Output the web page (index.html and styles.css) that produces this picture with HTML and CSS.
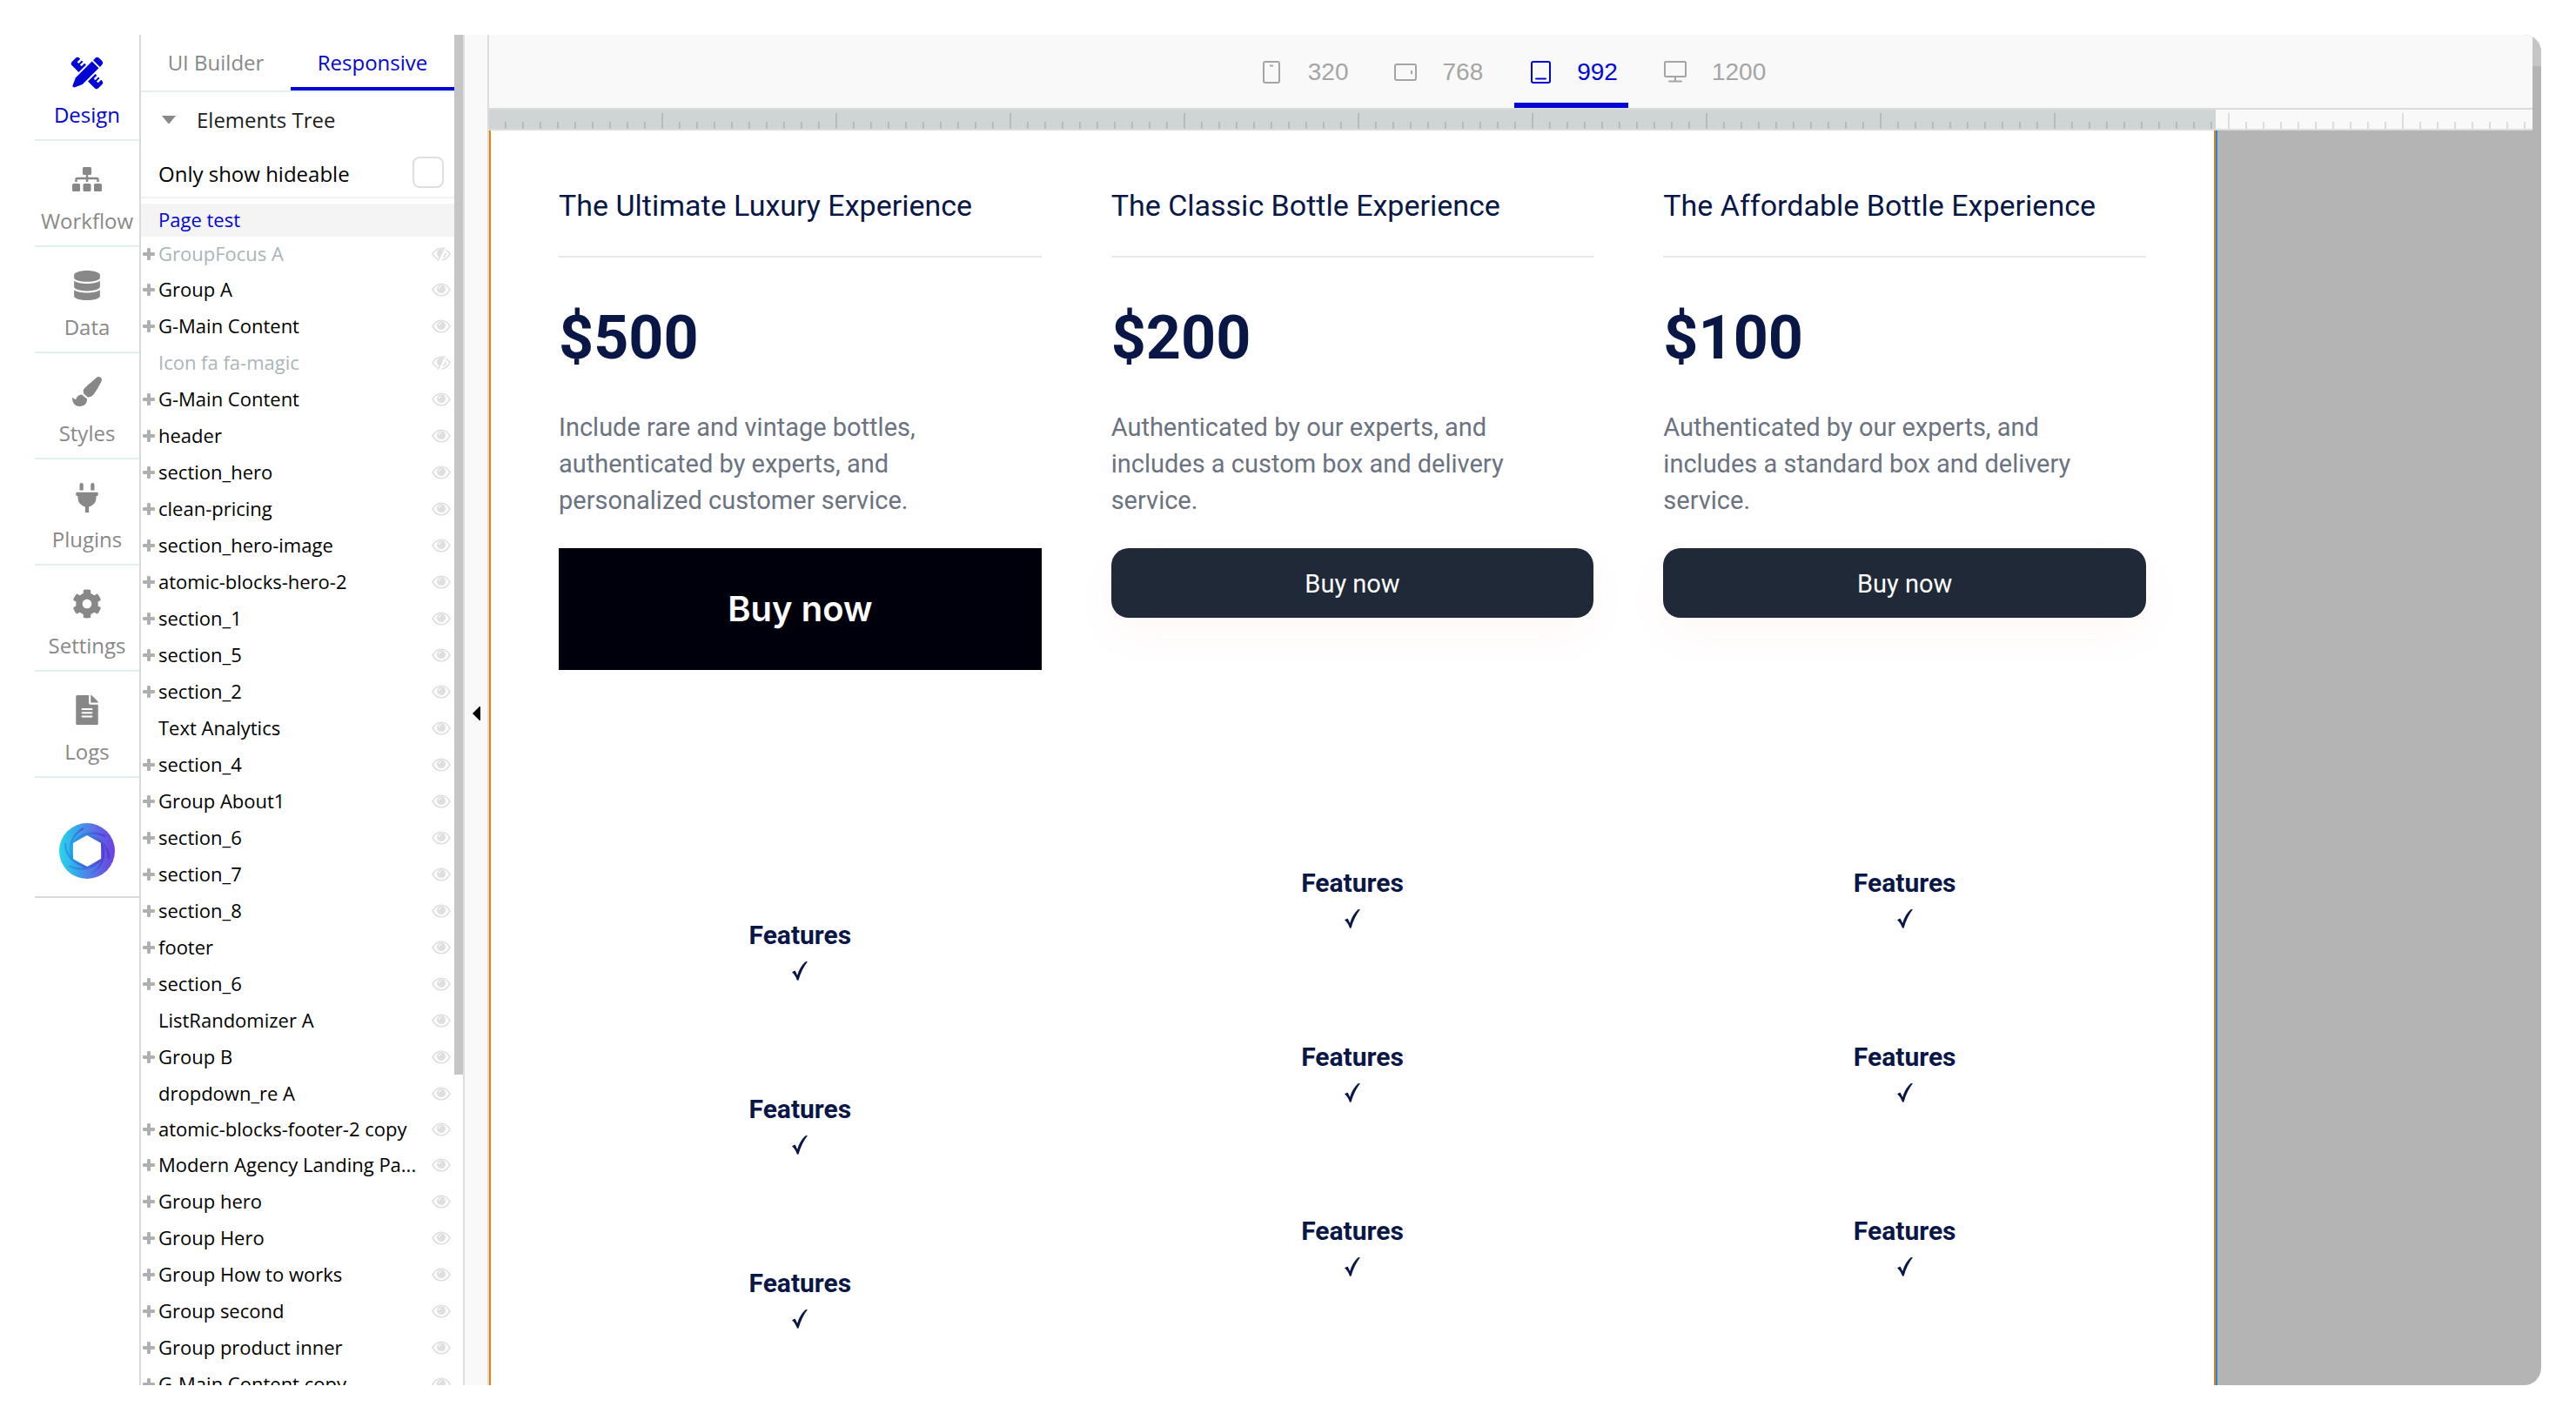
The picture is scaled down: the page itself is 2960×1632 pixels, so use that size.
FILE: index.html
```html
<!DOCTYPE html>
<html lang="en">
<head>
<meta charset="utf-8">
<title>Page test – Responsive editor</title>
<meta name="viewport" content="width=device-width, initial-scale=1">
<link rel="stylesheet" href="styles.css">
</head>
<body>
<svg class="sprite" aria-hidden="true">
  <symbol id="eye" viewBox="0 0 22 16">
    <path d="M1 8C3.500 3.700 7 1.200 11 1.200S18.500 3.700 21 8C18.500 12.300 15 14.800 11 14.800S3.500 12.300 1 8z" fill="none" stroke="currentColor" stroke-width="1.600"/>
    <circle cx="11" cy="7.200" r="5" fill="currentColor"/>
    <path d="M8.300 7.200a2.800 2.800 0 0 1 2.800-2.900" fill="none" stroke="#fff" stroke-width="1"/>
  </symbol>
  <symbol id="eye-off" viewBox="0 0 22 18">
    <path d="M7.500 15C4.800 13.800 2.600 11.700 1 9C3.500 4.700 7 2.200 11 2.200l2 .2M16.500 4.200C18.300 5.300 19.800 7 21 9c-2.300 4-5.500 6.500-9.300 6.800" fill="none" stroke="currentColor" stroke-width="1.600"/>
    <path d="M9 12.500C6.800 11 6 9.500 6 8a5 5 0 0 1 6.500-4.600z" fill="currentColor"/>
    <path d="M14.800 1L7 17M16 7.500c.3 2-.7 4-2.600 5.200" fill="none" stroke="currentColor" stroke-width="1.600"/>
  </symbol>
  <symbol id="plus" viewBox="0 0 14 14">
    <path d="M5 1.500Q5 0 6 0h2q1 0 1 1.500V5h3.500Q14 5 14 6v2q0 1-1.500 1H9v3.500Q9 14 8 14H6q-1 0-1-1.500V9H1.500Q0 9 0 8V6q0-1 1.500-1H5z" fill="currentColor"/>
  </symbol>
  <symbol id="check" viewBox="0 0 20 24">
    <path d="M1 13.200l3.400-1.700c1.100 1.600 2 3.400 2.700 5.400C9.300 10 12.600 4.800 16.500 1.200L19 1C14.400 7 10.800 14.300 8.600 22.600L7 22.800C5.700 18.900 3.900 15.700 1 13.200z" fill="currentColor"/>
  </symbol>
</svg>

<div class="app">
  <nav class="rail" aria-label="Editor sections">
    <a class="rail-item rail-item--active" href="#design">
      <svg class="rail-icon" viewBox="0 0 34 34" aria-hidden="true">
        <g transform="translate(17 17) rotate(45)" fill="currentColor">
          <path d="M-5.500-15.500v-3q0-3.500 3.500-3.500h4q3.500 0 3.500 3.500v3z"/>
          <path d="M-5.500-13.500h11V13L1.500 22q-1.500 1.500-3 0L-5.500 13z"/>
          <path d="M-7.500-6v12h-10.500q-3.500 0-3.500-3v-6q0-3 3.500-3h1v5h2.500v-5h2v5h2.500v-5z"/>
          <path d="M7.500-6v12h10.500q3.500 0 3.500-3v-6q0-3-3.500-3h-1v5h-2.500v-5h-2v5h-2.500v-5z"/>
        </g>
      </svg>
      <span>Design</span>
    </a>
    <a class="rail-item" href="#workflow">
      <svg class="rail-icon" viewBox="0 0 34 34" aria-hidden="true">
        <g fill="currentColor"><rect x="12" y="3" width="10" height="9" rx="1.500"/><rect x="0" y="22" width="9" height="9" rx="1.500"/><rect x="12.500" y="22" width="9" height="9" rx="1.500"/><rect x="25" y="22" width="9" height="9" rx="1.500"/></g>
        <path d="M17 11v9M4.500 20v-3q0-1 1-1h23q1 0 1 1v3" fill="none" stroke="currentColor" stroke-width="2.500"/>
      </svg>
      <span>Workflow</span>
    </a>
    <a class="rail-item" href="#data">
      <svg class="rail-icon" viewBox="0 0 448 512" aria-hidden="true"><path fill="currentColor" d="M448 73.143v45.714C448 159.143 347.667 192 224 192S0 159.143 0 118.857V73.143C0 32.857 100.333 0 224 0s224 32.857 224 73.143zM448 176v102.857C448 319.143 347.667 352 224 352S0 319.143 0 278.857V176c48.125 33.143 136.208 48.572 224 48.572S399.874 209.143 448 176zm0 160v102.857C448 479.143 347.667 512 224 512S0 479.143 0 438.857V336c48.125 33.143 136.208 48.572 224 48.572S399.874 369.143 448 336z"/></svg>
      <span>Data</span>
    </a>
    <a class="rail-item" href="#styles">
      <svg class="rail-icon" viewBox="0 0 512 512" aria-hidden="true"><path fill="currentColor" d="M167.020 309.340c-40.120 2.580-76.530 17.860-97.190 72.300-2.350 6.210-8 9.980-14.590 9.980-11.110 0-45.460-27.670-55.250-34.350C0 439.620 37.930 512 128 512c75.860 0 128-43.770 128-120.190 0-3.110-.65-6.080-.97-9.130l-88.010-73.340zM457.890 0c-15.160 0-29.370 6.710-40.210 16.450C213.270 199.050 192 203.340 192 257.090c0 13.700 3.250 26.760 8.730 38.700l63.820 53.180c7.210 1.800 14.640 3.030 22.390 3.030 62.110 0 98.110-45.470 211.160-256.460 7.380-14.350 13.900-29.850 13.900-45.990C512 20.640 486 0 457.890 0z"/></svg>
      <span>Styles</span>
    </a>
    <a class="rail-item" href="#plugins">
      <svg class="rail-icon" viewBox="0 0 384 512" aria-hidden="true"><path fill="currentColor" d="M320 32a32 32 0 0 0-64 0v96h64zm48 128H16A16 16 0 0 0 0 176v32a16 16 0 0 0 16 16h16v32a160.070 160.070 0 0 0 128 156.800V512h64v-99.200A160.070 160.070 0 0 0 352 256v-32h16a16 16 0 0 0 16-16v-32a16 16 0 0 0-16-16zM128 32a32 32 0 0 0-64 0v96h64z"/></svg>
      <span>Plugins</span>
    </a>
    <a class="rail-item" href="#settings">
      <svg class="rail-icon" viewBox="0 0 512 512" aria-hidden="true"><path fill="currentColor" d="M487.400 315.700l-42.600-24.600c4.300-23.200 4.300-47 0-70.200l42.600-24.600c4.900-2.800 7.100-8.600 5.500-14-11.100-35.600-30-67.800-54.700-94.600-3.800-4.100-10-5.100-14.800-2.300L380.800 110c-17.900-15.400-38.500-27.300-60.800-35.100V25.800c0-5.600-3.900-10.500-9.400-11.700-36.700-8.200-74.300-7.800-109.200 0-5.500 1.200-9.400 6.100-9.400 11.700V75c-22.200 7.900-42.800 19.800-60.800 35.100L88.700 85.500c-4.900-2.800-11-1.900-14.800 2.300-24.700 26.700-43.600 58.900-54.700 94.600-1.700 5.400.6 11.200 5.500 14L67.300 221c-4.300 23.200-4.300 47 0 70.200l-42.600 24.600c-4.900 2.800-7.100 8.600-5.500 14 11.100 35.600 30 67.800 54.700 94.600 3.800 4.100 10 5.100 14.800 2.300l42.600-24.600c17.900 15.400 38.500 27.300 60.800 35.100v49.200c0 5.600 3.900 10.500 9.400 11.700 36.700 8.200 74.300 7.800 109.200 0 5.500-1.200 9.400-6.100 9.400-11.700v-49.200c22.200-7.900 42.800-19.800 60.800-35.100l42.600 24.600c4.900 2.800 11 1.900 14.800-2.300 24.700-26.700 43.600-58.900 54.700-94.600 1.500-5.500-.7-11.300-5.600-14.100zM256 336c-44.100 0-80-35.900-80-80s35.900-80 80-80 80 35.900 80 80-35.900 80-80 80z"/></svg>
      <span>Settings</span>
    </a>
    <a class="rail-item" href="#logs">
      <svg class="rail-icon" viewBox="0 0 384 512" aria-hidden="true"><path fill="currentColor" d="M224 136V0H24C10.700 0 0 10.700 0 24v464c0 13.300 10.700 24 24 24h336c13.300 0 24-10.700 24-24V160H248c-13.200 0-24-10.800-24-24zm64 236c0 6.600-5.400 12-12 12H108c-6.600 0-12-5.400-12-12v-8c0-6.600 5.400-12 12-12h168c6.600 0 12 5.400 12 12v8zm0-64c0 6.600-5.400 12-12 12H108c-6.600 0-12-5.400-12-12v-8c0-6.600 5.400-12 12-12h168c6.600 0 12 5.400 12 12v8zm0-72v8c0 6.600-5.400 12-12 12H108c-6.600 0-12-5.400-12-12v-8c0-6.600 5.400-12 12-12h168c6.600 0 12 5.400 12 12zm96-114.100v6.100H256V0h6.100c6.400 0 12.500 2.500 17 7l97.900 98c4.500 4.500 7 10.600 7 16.900z"/></svg>
      <span>Logs</span>
    </a>
    <a class="rail-logo" href="#home" aria-label="Home">
      <svg width="64" height="64" viewBox="0 0 64 64" aria-hidden="true">
        <defs>
          <linearGradient id="ring" x1="0" y1="0" x2="1" y2="0"><stop offset="0" stop-color="#2bd3ea"/><stop offset=".3" stop-color="#36a9ea"/><stop offset=".6" stop-color="#5b74e6"/><stop offset="1" stop-color="#6d3fe0"/></linearGradient>
          <linearGradient id="fold" x1="0" y1="0" x2="1" y2="0"><stop offset="0" stop-color="#1b8fe0"/><stop offset=".55" stop-color="#2a62d8"/><stop offset="1" stop-color="#4a26cc"/></linearGradient>
        </defs>
        <circle cx="32" cy="32" r="32" fill="url(#ring)"/>
        <g fill="none" stroke="url(#fold)" stroke-width="2.500" stroke-opacity=".6">
          <path d="M16 41C10 28 13 14 28 6"/>
          <path d="M16 23C24 12 39 8 53 15"/>
          <path d="M32 14C46 16 57 27 57 41"/>
          <path d="M48 23C54 36 51 50 36 58"/>
          <path d="M48 41C40 52 25 56 11 49"/>
          <path d="M32 50C18 48 7 37 7 23"/>
        </g>
        <path d="M32 14l16 9v18l-16 9-16-9V23z" fill="#fff"/>
      </svg>
    </a>
  </nav>

  <aside class="panel">
    <div class="panel-body">
      <div class="tabs" role="tablist">
        <button class="tab" type="button" role="tab" aria-selected="false">UI Builder</button>
        <button class="tab tab--active" type="button" role="tab" aria-selected="true">Responsive</button>
      </div>
      <button class="tree-head" type="button" aria-expanded="true">
        <svg width="16" height="10" viewBox="0 0 16 10" aria-hidden="true"><path d="M0 0h16L9 8.500q-1 1-2 0z" fill="#888"/></svg>
        Elements Tree
      </button>
      <div class="filter">
        <label for="hideable">Only show hideable</label>
        <input class="tick" id="hideable" type="checkbox">
      </div>
      <ul class="tree" id="tree">
        <li class="node node--page"><span class="name">Page test</span></li>
      </ul>
    </div>
    <div class="scroll"><div class="scroll-thumb"></div></div>
  </aside>

  <div class="gutter">
    <button class="collapse" type="button" aria-label="Collapse panel">
      <svg width="9" height="16" viewBox="0 0 9 16" aria-hidden="true"><path d="M9 0v16H8L0 8l8-8z" fill="#000"/></svg>
    </button>
  </div>

  <main class="stage">
    <header class="stage-head">
      <div class="widths">
        <button class="width" type="button">
          <svg width="28" height="28" viewBox="0 0 28 28" fill="none" stroke="currentColor" stroke-width="2" aria-hidden="true"><rect x="5" y="2" width="18" height="24" rx="2"/><path d="M12 6.500h4" stroke-width="2"/></svg>
          320
        </button>
        <button class="width" type="button">
          <svg width="28" height="28" viewBox="0 0 28 28" fill="none" stroke="currentColor" stroke-width="2" aria-hidden="true"><rect x="2" y="5" width="24" height="18" rx="2"/><path d="M21 12v4" stroke-width="2"/></svg>
          768
        </button>
        <button class="width width--active" type="button">
          <svg width="28" height="28" viewBox="0 0 28 28" fill="none" stroke="currentColor" stroke-width="2" aria-hidden="true"><rect x="4" y="2" width="21" height="24" rx="2"/><path d="M9 21.500h11" stroke-width="2" stroke-linecap="round"/></svg>
          992
        </button>
        <button class="width" type="button">
          <svg width="28" height="28" viewBox="0 0 28 28" fill="none" stroke="currentColor" stroke-width="2" aria-hidden="true"><rect x="2" y="2" width="24" height="17" rx="1"/><path d="M14 20v4M7 24.500h14" stroke-linecap="round"/></svg>
          1200
        </button>
      </div>
      <div class="ruler"><div class="ruler-in"></div><div class="ruler-out"></div></div>
    </header>
    <div class="stage-bar"><div class="stage-bar-thumb"></div></div>

    <div class="canvas">
      <div class="page">
        <section class="plan">
          <h2 class="plan-title">The Ultimate Luxury Experience</h2>
          <p class="price">$500</p>
          <p class="about">Include rare and vintage bottles, authenticated by experts, and personalized customer service.</p>
          <button class="buy buy--block" type="button">Buy now</button>
          <ul class="features">
            <li>Features<svg class="check" aria-hidden="true"><use href="#check"/></svg></li>
            <li>Features<svg class="check" aria-hidden="true"><use href="#check"/></svg></li>
            <li>Features<svg class="check" aria-hidden="true"><use href="#check"/></svg></li>
          </ul>
        </section>
        <section class="plan">
          <h2 class="plan-title">The Classic Bottle Experience</h2>
          <p class="price">$200</p>
          <p class="about">Authenticated by our experts, and includes a custom box and delivery service.</p>
          <button class="buy" type="button">Buy now</button>
          <ul class="features">
            <li>Features<svg class="check" aria-hidden="true"><use href="#check"/></svg></li>
            <li>Features<svg class="check" aria-hidden="true"><use href="#check"/></svg></li>
            <li>Features<svg class="check" aria-hidden="true"><use href="#check"/></svg></li>
          </ul>
        </section>
        <section class="plan">
          <h2 class="plan-title">The Affordable Bottle Experience</h2>
          <p class="price">$100</p>
          <p class="about">Authenticated by our experts, and includes a standard box and delivery service.</p>
          <button class="buy" type="button">Buy now</button>
          <ul class="features">
            <li>Features<svg class="check" aria-hidden="true"><use href="#check"/></svg></li>
            <li>Features<svg class="check" aria-hidden="true"><use href="#check"/></svg></li>
            <li>Features<svg class="check" aria-hidden="true"><use href="#check"/></svg></li>
          </ul>
        </section>
      </div>
    </div>
  </main>
</div>
<script src="tree.js"></script>
</body>
</html>
```
FILE: tree.js
```js
// Elements of the page. leaf: no children to expand; hidden: not visible on load; tight: shorter row.
const nodes = [
  { name: 'GroupFocus A', hidden: true, tight: true },
  { name: 'Group A' },
  { name: 'G-Main Content' },
  { name: 'Icon fa fa-magic', leaf: true, hidden: true },
  { name: 'G-Main Content' },
  { name: 'header' },
  { name: 'section_hero' },
  { name: 'clean-pricing' },
  { name: 'section_hero-image' },
  { name: 'atomic-blocks-hero-2' },
  { name: 'section_1' },
  { name: 'section_5' },
  { name: 'section_2' },
  { name: 'Text Analytics', leaf: true },
  { name: 'section_4' },
  { name: 'Group About1' },
  { name: 'section_6' },
  { name: 'section_7' },
  { name: 'section_8' },
  { name: 'footer' },
  { name: 'section_6' },
  { name: 'ListRandomizer A', leaf: true },
  { name: 'Group B' },
  { name: 'dropdown_re A', leaf: true },
  { name: 'atomic-blocks-footer-2 copy', tight: true },
  { name: 'Modern Agency Landing Pa...' },
  { name: 'Group hero' },
  { name: 'Group Hero' },
  { name: 'Group How to works' },
  { name: 'Group second' },
  { name: 'Group product inner' },
  { name: 'G-Main Content copy' }
];

const tree = document.getElementById('tree');
for (const node of nodes) {
  const row = document.createElement('li');
  row.className = 'node' + (node.hidden ? ' node--hidden' : '') + (node.tight ? ' node--tight' : '');
  const toggle = node.leaf
    ? ''
    : `<button class="toggle" type="button" aria-label="Expand ${node.name}"><svg width="14" height="14"><use href="#plus"/></svg></button>`;
  row.innerHTML = `${toggle}<span class="name">${node.name}</span>
    <button class="see" type="button" aria-label="Toggle visibility of ${node.name}"><svg width="22" height="18"><use href="#${node.hidden ? 'eye-off' : 'eye'}"/></svg></button>`;
  tree.append(row);
}
```
FILE: styles.css
```css
* {
  box-sizing: border-box;
}

body {
  margin: 0;
  padding: 40px;
  background: #fff;
  font-family: "Open Sans", "Liberation Sans", sans-serif;
  font-size: 24px;
  line-height: 32px;
  color: #888;
}

button {
  margin: 0;
  padding: 0;
  border: 0;
  background: none;
  color: inherit;
  font: inherit;
  cursor: pointer;
}

ul,
h2,
p {
  margin: 0;
  padding: 0;
  list-style: none;
}

svg {
  display: block;
  flex: none;
}

.sprite {
  position: absolute;
  width: 0;
  height: 0;
}

.app {
  display: flex;
  height: calc(100vh - 80px);
  border-radius: 20px;
  overflow: hidden;
}

/* Section rail */
.rail {
  flex: none;
  width: 122px;
  border-right: 2px solid #dadada;
}

.rail-item {
  display: flex;
  flex-direction: column;
  align-items: center;
  gap: 15px;
  padding: 27px 0 12px;
  border-bottom: 2px solid #e1eef2;
  color: #888;
  text-decoration: none;
}

.rail-item--active {
  color: #0205d3;
}

.rail-icon {
  height: 34px;
  width: 34px;
  overflow: visible;
}

.rail-logo {
  display: flex;
  justify-content: center;
  padding: 52px 0 20px;
  border-bottom: 2px solid #dadada;
}

/* Elements panel */
.panel {
  flex: none;
  display: flex;
  width: 372px;
  border-right: 2px solid #dedede;
}

.panel-body {
  flex: 1;
  min-width: 0;
  overflow: hidden;
}

.tabs {
  display: grid;
  grid-template-columns: 172px 1fr;
  border-bottom: 2px solid #e1eef2;
}

.tab {
  height: 64px;
  padding-top: 4px;
  border-bottom: 4px solid transparent;
}

.tab--active {
  border-bottom-color: #0205d3;
  color: #0205d3;
}

.tree-head {
  display: flex;
  align-items: center;
  gap: 24px;
  width: 100%;
  height: 64px;
  padding: 0 24px;
  color: #1c1c1c;
}

.filter {
  display: flex;
  align-items: center;
  justify-content: space-between;
  height: 58px;
  padding: 0 12px 0 20px;
  border-bottom: 2px solid #f2f2f2;
  color: #000;
}

.filter label {
  padding-top: 4px;
}

.tick {
  appearance: none;
  width: 36px;
  height: 36px;
  margin: 0;
  border: 2px solid #dedede;
  border-radius: 8px;
  background: #fff;
}

.tick:checked {
  background: #0205d3;
}

.tree {
  padding-top: 6px;
}

.node {
  display: flex;
  align-items: center;
  height: 42px;
  padding-right: 4px;
  color: #000;
  font-size: 22px;
}

.node--tight {
  height: 40px;
}

.node--page {
  height: 38px;
  background: #f4f4f4;
  color: #0205d3;
}

.node--hidden {
  color: #a9b5b8;
}

.name {
  flex: 1;
  min-width: 0;
  padding: 0 10px 3px 20px;
  overflow: hidden;
  text-overflow: ellipsis;
  white-space: nowrap;
}

.toggle {
  padding-left: 2px;
  color: #aeb0b0;
}

.toggle + .name {
  padding-left: 4px;
}

.see {
  color: #dfdfdf;
}

.scroll {
  flex: none;
  width: 10px;
}

.scroll-thumb {
  height: 77%;
  background: #c5c5c5;
}

.gutter {
  flex: none;
  display: flex;
  align-items: center;
  justify-content: center;
  width: 28px;
  padding-top: 8px;
  border-right: 2px solid #dcdcdc;
  background: #f9f9f9;
}

/* Stage: toolbar and ruler above the canvas, scroll bar on the right */
.stage {
  flex: 1;
  display: grid;
  grid-template-columns: minmax(0, 1fr) 10px;
  grid-template-rows: auto minmax(0, 1fr);
  min-width: 0;
  background: #b4b4b4;
}

.stage-head {
  background: #f9f9f9;
}

.widths {
  display: flex;
  justify-content: center;
  gap: 24px;
  border-bottom: 2px solid #dcdcdc;
}

.width {
  display: flex;
  align-items: center;
  gap: 28px;
  height: 84px;
  padding: 8px 12px 0 16px;
  border-bottom: 6px solid transparent;
  color: #a5a5a5;
  font-family: "Liberation Sans", Arial, sans-serif;
  font-size: 28px;
}

.width--active {
  border-bottom-color: #0205d3;
  color: #0205d3;
}

.ruler {
  display: grid;
  grid-template-columns: minmax(0, 1fr) 364px;
  height: 24px;
  border-bottom: 2px solid #dcdcdc;
}

.ruler-in,
.ruler-out {
  --tick: #dcdcdc;
  background-image:
    linear-gradient(90deg, var(--tick) 2px, transparent 2px),
    linear-gradient(90deg, var(--tick) 2px, transparent 2px);
  background-size: 20px 8px, 200px 18px;
  background-repeat: repeat-x;
  background-position: 14px 100%, 14px 100%;
}

.ruler-in {
  --tick: #b5bcbc;
  background-color: #cfd5d5;
  background-position: -2px 100%, -2px 100%;
}

.stage-bar-thumb {
  height: 36px;
  background: #c6c6c6;
}

.canvas {
  grid-column: 1 / -1;
  padding-right: 374px;
  overflow: hidden;
}

/* Edited page */
.page {
  display: grid;
  grid-template-columns: repeat(3, minmax(0, 1fr));
  gap: 80px;
  height: 100%;
  padding: 65px 78px 0;
  border: solid #e58008;
  border-width: 0 2px;
  box-shadow: 2px 0 0 #1c86e8;
  background: #fff;
  color: #091747;
  font-family: Roboto, "Open Sans", sans-serif;
  font-size: 30px;
  line-height: 42px;
}

.plan {
  display: flex;
  flex-direction: column;
}

.plan-title {
  padding-bottom: 37px;
  border-bottom: 2px solid #e5e7eb;
  font-size: 34px;
  font-weight: 400;
}

.price {
  padding: 52px 0 42px;
  font-size: 70px;
  font-weight: 700;
  line-height: 80px;
}

.about {
  padding: 0 40px 34px 0;
  color: #6b7280;
  font-size: 29px;
}

.buy {
  height: 80px;
  padding-top: 2px;
  border-radius: 20px;
  background: #1f2937;
  box-shadow: 0 20px 50px rgba(230, 80, 60, 0.04);
  color: #fff;
  font-size: 29px;
}

.buy--block {
  height: 140px;
  padding-top: 0;
  border-radius: 0;
  background: #00000d;
  box-shadow: none;
  font-family: Inter, sans-serif;
  font-size: 40px;
  font-weight: 600;
}

.features {
  display: flex;
  flex-direction: column;
  gap: 116px;
  padding-top: 284px;
  font-weight: 700;
  text-align: center;
}

.check {
  width: 20px;
  height: 24px;
  margin: 8px auto 10px;
}
```
